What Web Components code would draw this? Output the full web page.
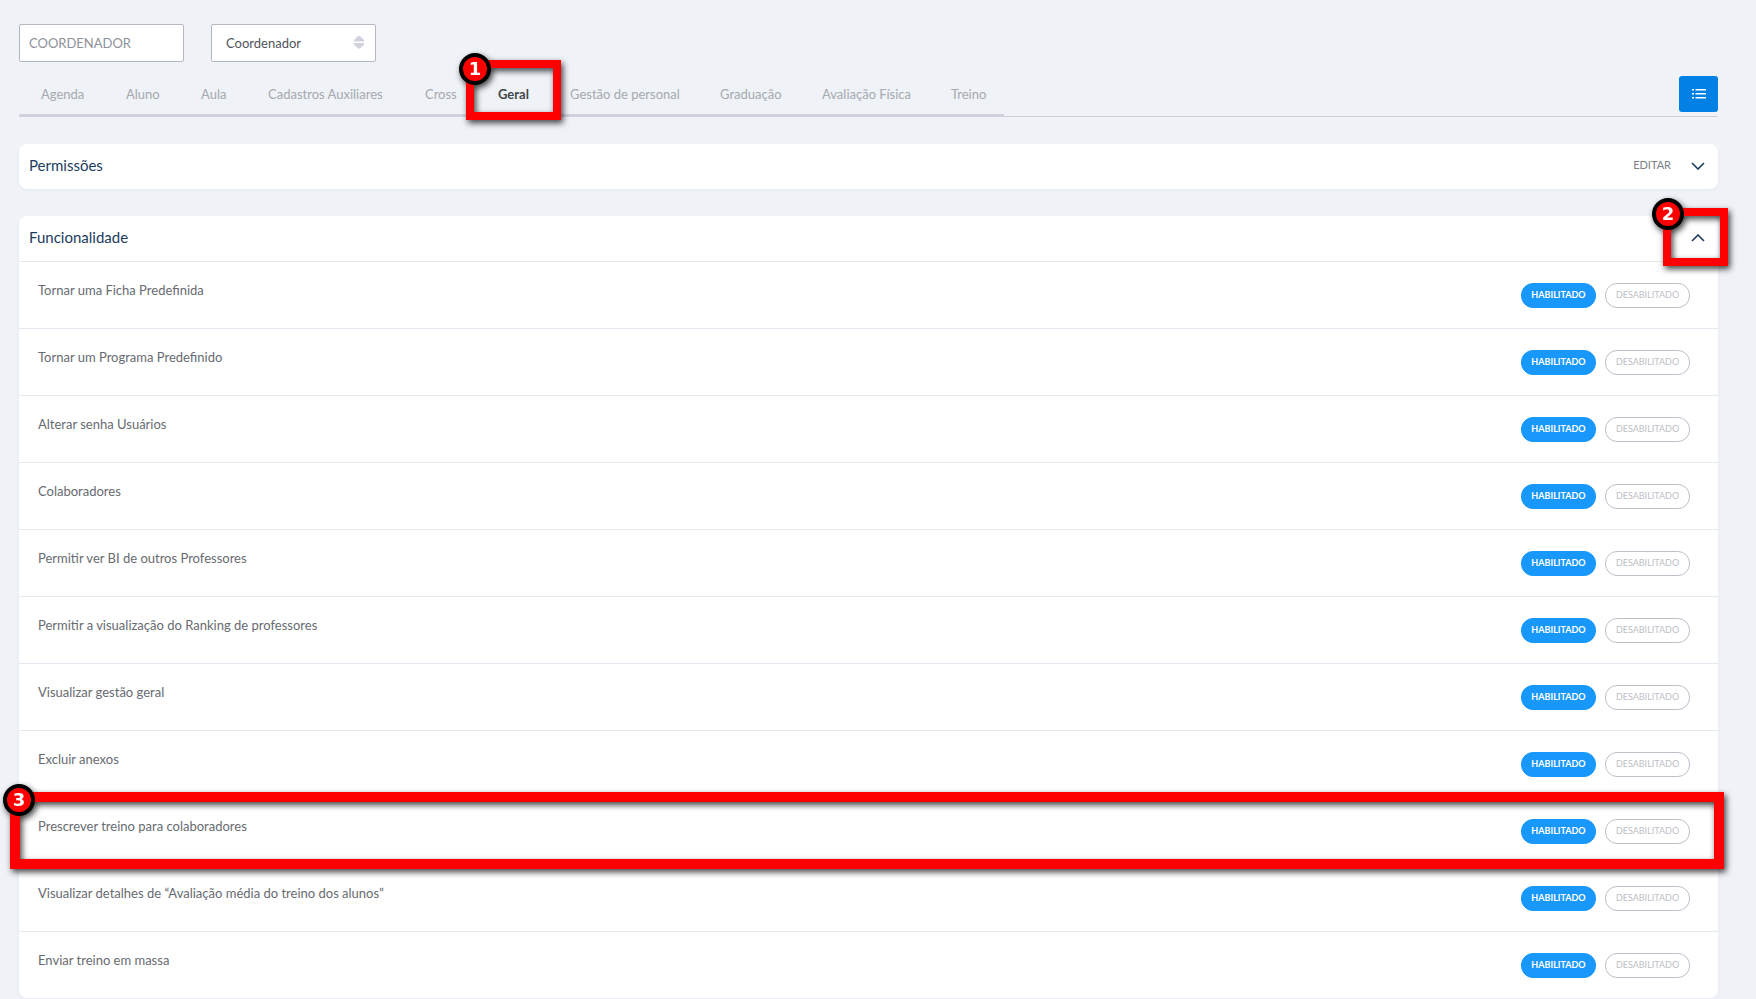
<!DOCTYPE html>
<html lang="pt-BR">
<head>
<meta charset="UTF-8">
<title>Perfil de acesso</title>
<style>
    body {
        margin: 0;
        background: #eff2f7;
        font-family: Lato, "Open Sans", sans-serif;
        font-size: 13px;
        line-height: 20px;
        color: #676b71;
    }
</style>
</head>
<body>
<profile-page></profile-page>

<script>
class CalloutBox extends HTMLElement {
    constructor() {
        super();
        this.attachShadow({ mode: 'open' });
    }

    connectedCallback() {
        this.shadowRoot.innerHTML = `
            <style>
                :host {
                    display: block;
                    position: absolute;
                    inset: var(--callout-inset, 0);
                    box-sizing: border-box;
                    border: var(--callout-border, 8px) solid #f00;
                    filter: drop-shadow(2px 3px 3px rgba(0, 0, 0, 0.75));
                    pointer-events: none;
                    z-index: 2;
                }
                .number {
                    position: absolute;
                    top: var(--badge-top, -15px);
                    left: var(--badge-left, -15px);
                    box-sizing: border-box;
                    width: 32px;
                    height: 32px;
                    border: 4px solid #000;
                    border-radius: 50%;
                    background: #f00;
                    color: #fff;
                    font: bold 18px/24px "DejaVu Sans", sans-serif;
                    text-align: center;
                }
            </style>
            <div class="number">${this.getAttribute('number')}</div>
        `;
    }
}

class ProfileFields extends HTMLElement {
    constructor() {
        super();
        this.attachShadow({ mode: 'open' });
    }

    connectedCallback() {
        this.shadowRoot.innerHTML = `
            <style>
                :host {
                    display: flex;
                    gap: 27px;
                }
                input, select {
                    box-sizing: border-box;
                    width: 100%;
                    height: 38px;
                    margin: 0;
                    border: 1px solid #b4b7c2;
                    border-radius: 2px;
                    background: #fff;
                    font: inherit;
                    outline: none;
                }
                input {
                    padding: 0 9px;
                    color: #8e9299;
                }
                select {
                    appearance: none;
                    padding: 0 14px;
                    color: #51555a;
                }
                .field {
                    position: relative;
                    width: 165px;
                }
                svg {
                    position: absolute;
                    top: 12px;
                    right: 12px;
                }
            </style>
            <div class="field">
                <input type="text" value="COORDENADOR" aria-label="Nome do perfil">
            </div>
            <div class="field">
                <select aria-label="Tipo de perfil"><option>Coordenador</option></select>
                <svg width="10" height="13" viewBox="0 0 10 13" fill="#d0d3dd">
                    <path d="M4 0H6L10 4V5.500H0V4ZM0 7H10V8.500L6 12.500H4L0 8.500Z"/>
                </svg>
            </div>
        `;
    }
}

class ModuleTab extends HTMLElement {
    constructor() {
        super();
        this.attachShadow({ mode: 'open' });
    }

    connectedCallback() {
        this.shadowRoot.innerHTML = `
            <style>
                :host {
                    display: block;
                    position: relative;
                }
                a {
                    display: block;
                    padding: 8px 20px 10px;
                    color: #a6a9ae;
                    text-decoration: none;
                    white-space: nowrap;
                }
                :host([active]) a {
                    color: #43474b;
                    font-weight: bold;
                }
            </style>
            <a href="#"><slot></slot></a>
            <slot name="callout"></slot>
        `;
    }
}

class ModuleTabs extends HTMLElement {
    constructor() {
        super();
        this.attachShadow({ mode: 'open' });
    }

    connectedCallback() {
        this.shadowRoot.innerHTML = `
            <style>
                :host {
                    display: flex;
                    justify-content: space-between;
                    align-items: flex-start;
                    border-bottom: 1px solid #cdd0d9;
                }
                nav {
                    display: grid;
                    grid-template-columns: 85px 75px 67px 157px 73px 72px 150px 102px 129px 73px;
                    margin-bottom: -1px;
                    padding-left: 2px;
                    border-bottom: 3px solid #d0d3dd;
                }
                button {
                    display: flex;
                    align-items: center;
                    justify-content: center;
                    width: 39px;
                    height: 36px;
                    padding: 0;
                    border: 0;
                    border-radius: 3px;
                    background: #0380e3;
                }
            </style>
            <nav><slot></slot></nav>
            <button type="button" aria-label="Listar">
                <svg width="14" height="12" viewBox="0 0 14 12" fill="#fff">
                    <path d="M0 1h2v1.500H0zM3.500 1H14v1.500H3.500zM0 5h2v1.500H0zM3.500 5H14v1.500H3.500zM0 9h2v1.500H0zM3.500 9H14v1.500H3.500z"/>
                </svg>
            </button>
        `;
    }
}

class PermissionCard extends HTMLElement {
    constructor() {
        super();
        this.attachShadow({ mode: 'open' });
    }

    connectedCallback() {
        const open = this.hasAttribute('open');
        const action = this.getAttribute('action');
        this.shadowRoot.innerHTML = `
            <style>
                :host {
                    display: block;
                    border-radius: 8px;
                    background: #fff;
                    box-shadow: 0 1px 3px rgba(80, 100, 140, 0.06);
                }
                header {
                    display: flex;
                    align-items: center;
                    height: 43px;
                    padding: 0 10px 2px;
                }
                h2 {
                    flex: 1;
                    margin: 0;
                    padding-bottom: 2px;
                    color: #1b3c60;
                    font-size: 15px;
                    font-weight: normal;
                }
                button {
                    padding: 0 0 2px;
                    border: 0;
                    background: none;
                    color: #7b8087;
                    font: inherit;
                    font-size: 11px;
                }
                .toggle {
                    position: relative;
                    display: flex;
                    align-items: center;
                    justify-content: center;
                    width: 20px;
                    height: 43px;
                    margin-left: 17px;
                    padding: 0;
                }
            </style>
            <header>
                <h2>${this.getAttribute('heading')}</h2>
                ${action ? `<button type="button">${action}</button>` : ''}
                <button type="button" class="toggle" aria-label="Expandir" aria-expanded="${open}">
                    <svg width="14" height="8" viewBox="0 0 14 8" fill="none" stroke="#1b3c60" stroke-width="1.600">
                        <path d="${open ? 'M1 7 7 1 13 7' : 'M1 1 7 7 13 1'}"/>
                    </svg>
                    <slot name="callout"></slot>
                </button>
            </header>
            <slot></slot>
        `;
    }
}

class PermissionRow extends HTMLElement {
    constructor() {
        super();
        this.attachShadow({ mode: 'open' });
    }

    connectedCallback() {
        this.shadowRoot.innerHTML = `
            <style>
                :host {
                    display: flex;
                    position: relative;
                    align-items: center;
                    box-sizing: border-box;
                    height: 67px;
                    padding: 0 28px 0 19px;
                    border-top: 1px solid #e3e8f1;
                }
                .label {
                    flex: 1;
                    padding-bottom: 11px;
                }
                .options {
                    display: flex;
                    gap: 9px;
                }
                button {
                    box-sizing: border-box;
                    width: 85px;
                    height: 25px;
                    padding: 0;
                    border: 1px solid #bdbfca;
                    border-radius: 12px;
                    background: #fff;
                    color: #bdc0c6;
                    font: inherit;
                    font-size: 9px;
                }
                .on {
                    width: 75px;
                    border-color: #1998fc;
                    background: #1998fc;
                    color: #fff;
                    font-weight: bold;
                }
            </style>
            <div class="label"><slot></slot></div>
            <div class="options">
                <button type="button" class="on" aria-pressed="true">HABILITADO</button>
                <button type="button" aria-pressed="false">DESABILITADO</button>
            </div>
            <slot name="callout"></slot>
        `;
    }
}

class ProfilePage extends HTMLElement {
    constructor() {
        super();
        this.attachShadow({ mode: 'open' });
    }

    connectedCallback() {
        this.shadowRoot.innerHTML = `
            <style>
                :host {
                    display: block;
                    padding: 24px 38px 1px 19px;
                }
                module-tabs {
                    margin-top: 14px;
                }
                permission-card {
                    margin-top: 27px;
                }
                .tab-callout {
                    --callout-inset: -16px -11px -6px -12px;
                }
                .toggle-callout {
                    --callout-inset: -8px -20px -7px -25px;
                    --badge-top: -18px;
                    --badge-left: -19px;
                }
                .row-callout {
                    --callout-inset: -6px -6px -5px -9px;
                    --callout-border: 10px;
                    --badge-top: -18px;
                    --badge-left: -17px;
                }
            </style>
            <profile-fields></profile-fields>
            <module-tabs>
                <module-tab>Agenda</module-tab>
                <module-tab>Aluno</module-tab>
                <module-tab>Aula</module-tab>
                <module-tab>Cadastros Auxiliares</module-tab>
                <module-tab>Cross</module-tab>
                <module-tab active>Geral<callout-box slot="callout" class="tab-callout" number="1"></callout-box></module-tab>
                <module-tab>Gestão de personal</module-tab>
                <module-tab>Graduação</module-tab>
                <module-tab>Avaliação Física</module-tab>
                <module-tab>Treino</module-tab>
            </module-tabs>
            <permission-card heading="Permissões" action="EDITAR"></permission-card>
            <permission-card heading="Funcionalidade" open>
                <callout-box slot="callout" class="toggle-callout" number="2"></callout-box>
                <permission-row>Tornar uma Ficha Predefinida</permission-row>
                <permission-row>Tornar um Programa Predefinido</permission-row>
                <permission-row>Alterar senha Usuários</permission-row>
                <permission-row>Colaboradores</permission-row>
                <permission-row>Permitir ver BI de outros Professores</permission-row>
                <permission-row>Permitir a visualização do Ranking de professores</permission-row>
                <permission-row>Visualizar gestão geral</permission-row>
                <permission-row>Excluir anexos</permission-row>
                <permission-row>Prescrever treino para colaboradores<callout-box slot="callout" class="row-callout" number="3"></callout-box></permission-row>
                <permission-row>Visualizar detalhes de “Avaliação média do treino dos alunos”</permission-row>
                <permission-row>Enviar treino em massa</permission-row>
            </permission-card>
        `;
    }
}

customElements.define('callout-box', CalloutBox);
customElements.define('profile-fields', ProfileFields);
customElements.define('module-tab', ModuleTab);
customElements.define('module-tabs', ModuleTabs);
customElements.define('permission-card', PermissionCard);
customElements.define('permission-row', PermissionRow);
customElements.define('profile-page', ProfilePage);
</script>
</body>
</html>
